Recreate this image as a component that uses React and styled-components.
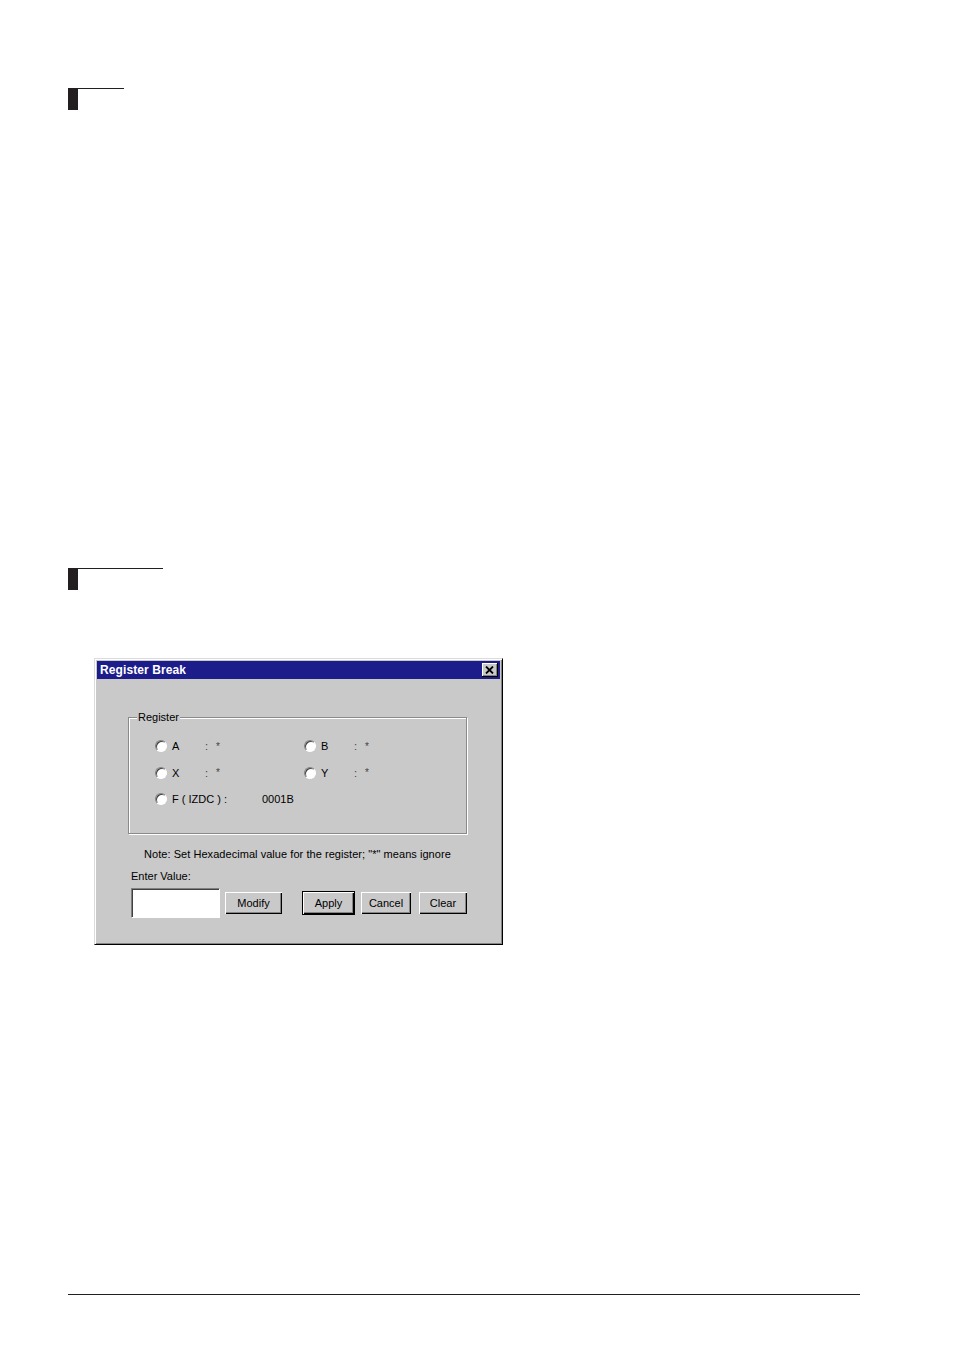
import React from "react";
import styled, { createGlobalStyle } from "styled-components";

const GlobalStyle = createGlobalStyle`
  html, body {
    margin: 0;
    padding: 0;
    background: #fff;
  }
  body {
    font-family: "Liberation Sans", Arial, sans-serif;
  }
`;

function Heading({ rule }) {
  return (
    <HeadingRow>
      <Block />
      <Rule $width={rule} />
    </HeadingRow>
  );
}

function Radio({ name, nameWidth, children }) {
  return (
    <RadioItem>
      <RadioDot />
      <Name $width={nameWidth}>{name}</Name>
      {children}
    </RadioItem>
  );
}

function Ignored() {
  return (
    <>
      <Colon>:</Colon>
      <Star>*</Star>
    </>
  );
}

function App() {
  return (
    <Page>
      <GlobalStyle />
      <Heading rule={46} />
      <Spacer $h={458} />
      <Heading rule={85} />
      <Window>
        <TitleBar>
          <span>Register Break</span>
          <CloseButton>
            <svg width="9" height="8" viewBox="0 0 9 8">
              <path d="M1 0.5 L8 7.5 M8 0.5 L1 7.5" stroke="#000" strokeWidth="1.8" />
            </svg>
          </CloseButton>
        </TitleBar>
        <Body>
          <GroupBox>
            <GroupLabel>Register</GroupLabel>
            <RadioGrid>
              <Radio name="A" nameWidth={33}><Ignored /></Radio>
              <Radio name="B" nameWidth={33}><Ignored /></Radio>
              <Radio name="X" nameWidth={33}><Ignored /></Radio>
              <Radio name="Y" nameWidth={33}><Ignored /></Radio>
              <Radio name="F ( IZDC ) :" nameWidth={90}>
                <Value>0001B</Value>
              </Radio>
            </RadioGrid>
          </GroupBox>
          <Note>Note: Set Hexadecimal value for the register; "*" means ignore</Note>
          <FieldLabel>Enter Value:</FieldLabel>
          <Controls>
            <Input />
            <Button $w={59}>Modify</Button>
            <Button $w={53} $default>Apply</Button>
            <Button $w={52}>Cancel</Button>
            <Button $w={50}>Clear</Button>
          </Controls>
        </Body>
      </Window>
      <Spacer $h={349} />
      <Footer />
    </Page>
  );
}

export default App;

const Page = styled.div`
  width: 954px;
  min-height: 1346px;
  box-sizing: border-box;
  padding: 88px 0 0 68px;
  display: flex;
  flex-direction: column;
  align-items: flex-start;
`;

const Spacer = styled.div`
  height: ${(p) => p.$h}px;
`;

const HeadingRow = styled.div`
  display: flex;
  align-items: flex-start;
`;

const Block = styled.div`
  width: 10px;
  height: 22px;
  background: #231f20;
`;

const Rule = styled.div`
  width: ${(p) => p.$width}px;
  height: 1.3px;
  background: #231f20;
`;

const Window = styled.div`
  margin: 68px 0 0 26px;
  width: 409px;
  height: 287px;
  box-sizing: border-box;
  background: #c9c9c9;
  border-top: 1px solid #dcdcdc;
  border-left: 1px solid #dcdcdc;
  border-right: 1px solid #000;
  border-bottom: 1px solid #000;
  box-shadow: inset 1px 1px 0 #fff, inset -1px -1px 0 #858585;
  padding: 2px;
  display: flex;
  flex-direction: column;
`;

const TitleBar = styled.div`
  height: 18px;
  background: #1c1c8b;
  color: #fff;
  font-weight: bold;
  font-size: 12px;
  letter-spacing: 0.1px;
  display: flex;
  align-items: center;
  justify-content: space-between;
  padding: 0 2px 0 3px;
`;

const CloseButton = styled.div`
  width: 16px;
  height: 14px;
  box-sizing: border-box;
  background: #c9c9c9;
  border-right: 1px solid #000;
  border-bottom: 1px solid #000;
  box-shadow: inset 1px 1px 0 #fff, inset -1px -1px 0 #858585;
  display: flex;
  align-items: center;
  justify-content: center;
`;

const Body = styled.div`
  padding: 38px 0 0 34px;
  display: flex;
  flex-direction: column;
  align-items: flex-start;
  font-size: 11px;
  color: #000;
`;

const GroupBox = styled.div`
  position: relative;
  margin-left: -3px;
  width: 339px;
  height: 117px;
  box-sizing: border-box;
  border: 1px solid #8a8a8a;
  box-shadow: inset 1px 1px 0 #fff, 1px 1px 0 #fff;
  padding: 15px 0 0 26px;
`;

const GroupLabel = styled.span`
  position: absolute;
  top: -7px;
  left: 8px;
  padding: 0 1px;
  background: #c9c9c9;
  line-height: 13px;
`;

const RadioGrid = styled.div`
  display: grid;
  grid-template-columns: 149px auto;
  grid-auto-rows: 26.5px;
`;

const RadioItem = styled.div`
  display: flex;
  align-items: center;
`;

const RadioDot = styled.span`
  width: 12px;
  height: 12px;
  box-sizing: border-box;
  border-radius: 50%;
  background: #fff;
  border: 1px solid;
  border-color: #808080 #fff #fff #808080;
  box-shadow: inset 1px 1px 0 #404040;
  margin-right: 5px;
`;

const Name = styled.span`
  width: ${(p) => p.$width}px;
`;

const Colon = styled.span`
  color: #444;
  width: 11px;
`;

const Star = styled.span`
  color: #444;
  font-size: 10px;
`;

const Value = styled.span``;

const Note = styled.div`
  margin: 14px 0 0 13px;
  line-height: 13px;
  letter-spacing: 0.05px;
`;

const FieldLabel = styled.div`
  margin-top: 9px;
  line-height: 13px;
`;

const Controls = styled.div`
  margin-top: 5px;
  display: flex;
  align-items: center;
`;

const Input = styled.div`
  width: 89px;
  height: 30px;
  box-sizing: border-box;
  background: #fff;
  border-top: 1px solid #808080;
  border-left: 1px solid #808080;
  border-right: 1px solid #fff;
  border-bottom: 1px solid #fff;
  box-shadow: inset 1px 1px 0 #404040;
  margin-right: 4px;
`;

const Button = styled.div`
  width: ${(p) => p.$w}px;
  height: 24px;
  box-sizing: border-box;
  display: flex;
  align-items: center;
  justify-content: center;
  background: #c9c9c9;
  border: 1px solid ${(p) => (p.$default ? "#000" : "transparent")};
  box-shadow: inset 1px 1px 0 #fff, inset -1px -1px 0 #000, inset -2px -2px 0 #858585;
  margin-right: 5px;
  &:nth-of-type(2) {
    margin-right: 19px;
  }
  &:nth-of-type(4) {
    margin-right: 6px;
  }
`;

const Footer = styled.div`
  width: 792px;
  height: 1px;
  background: #231f20;
`;
